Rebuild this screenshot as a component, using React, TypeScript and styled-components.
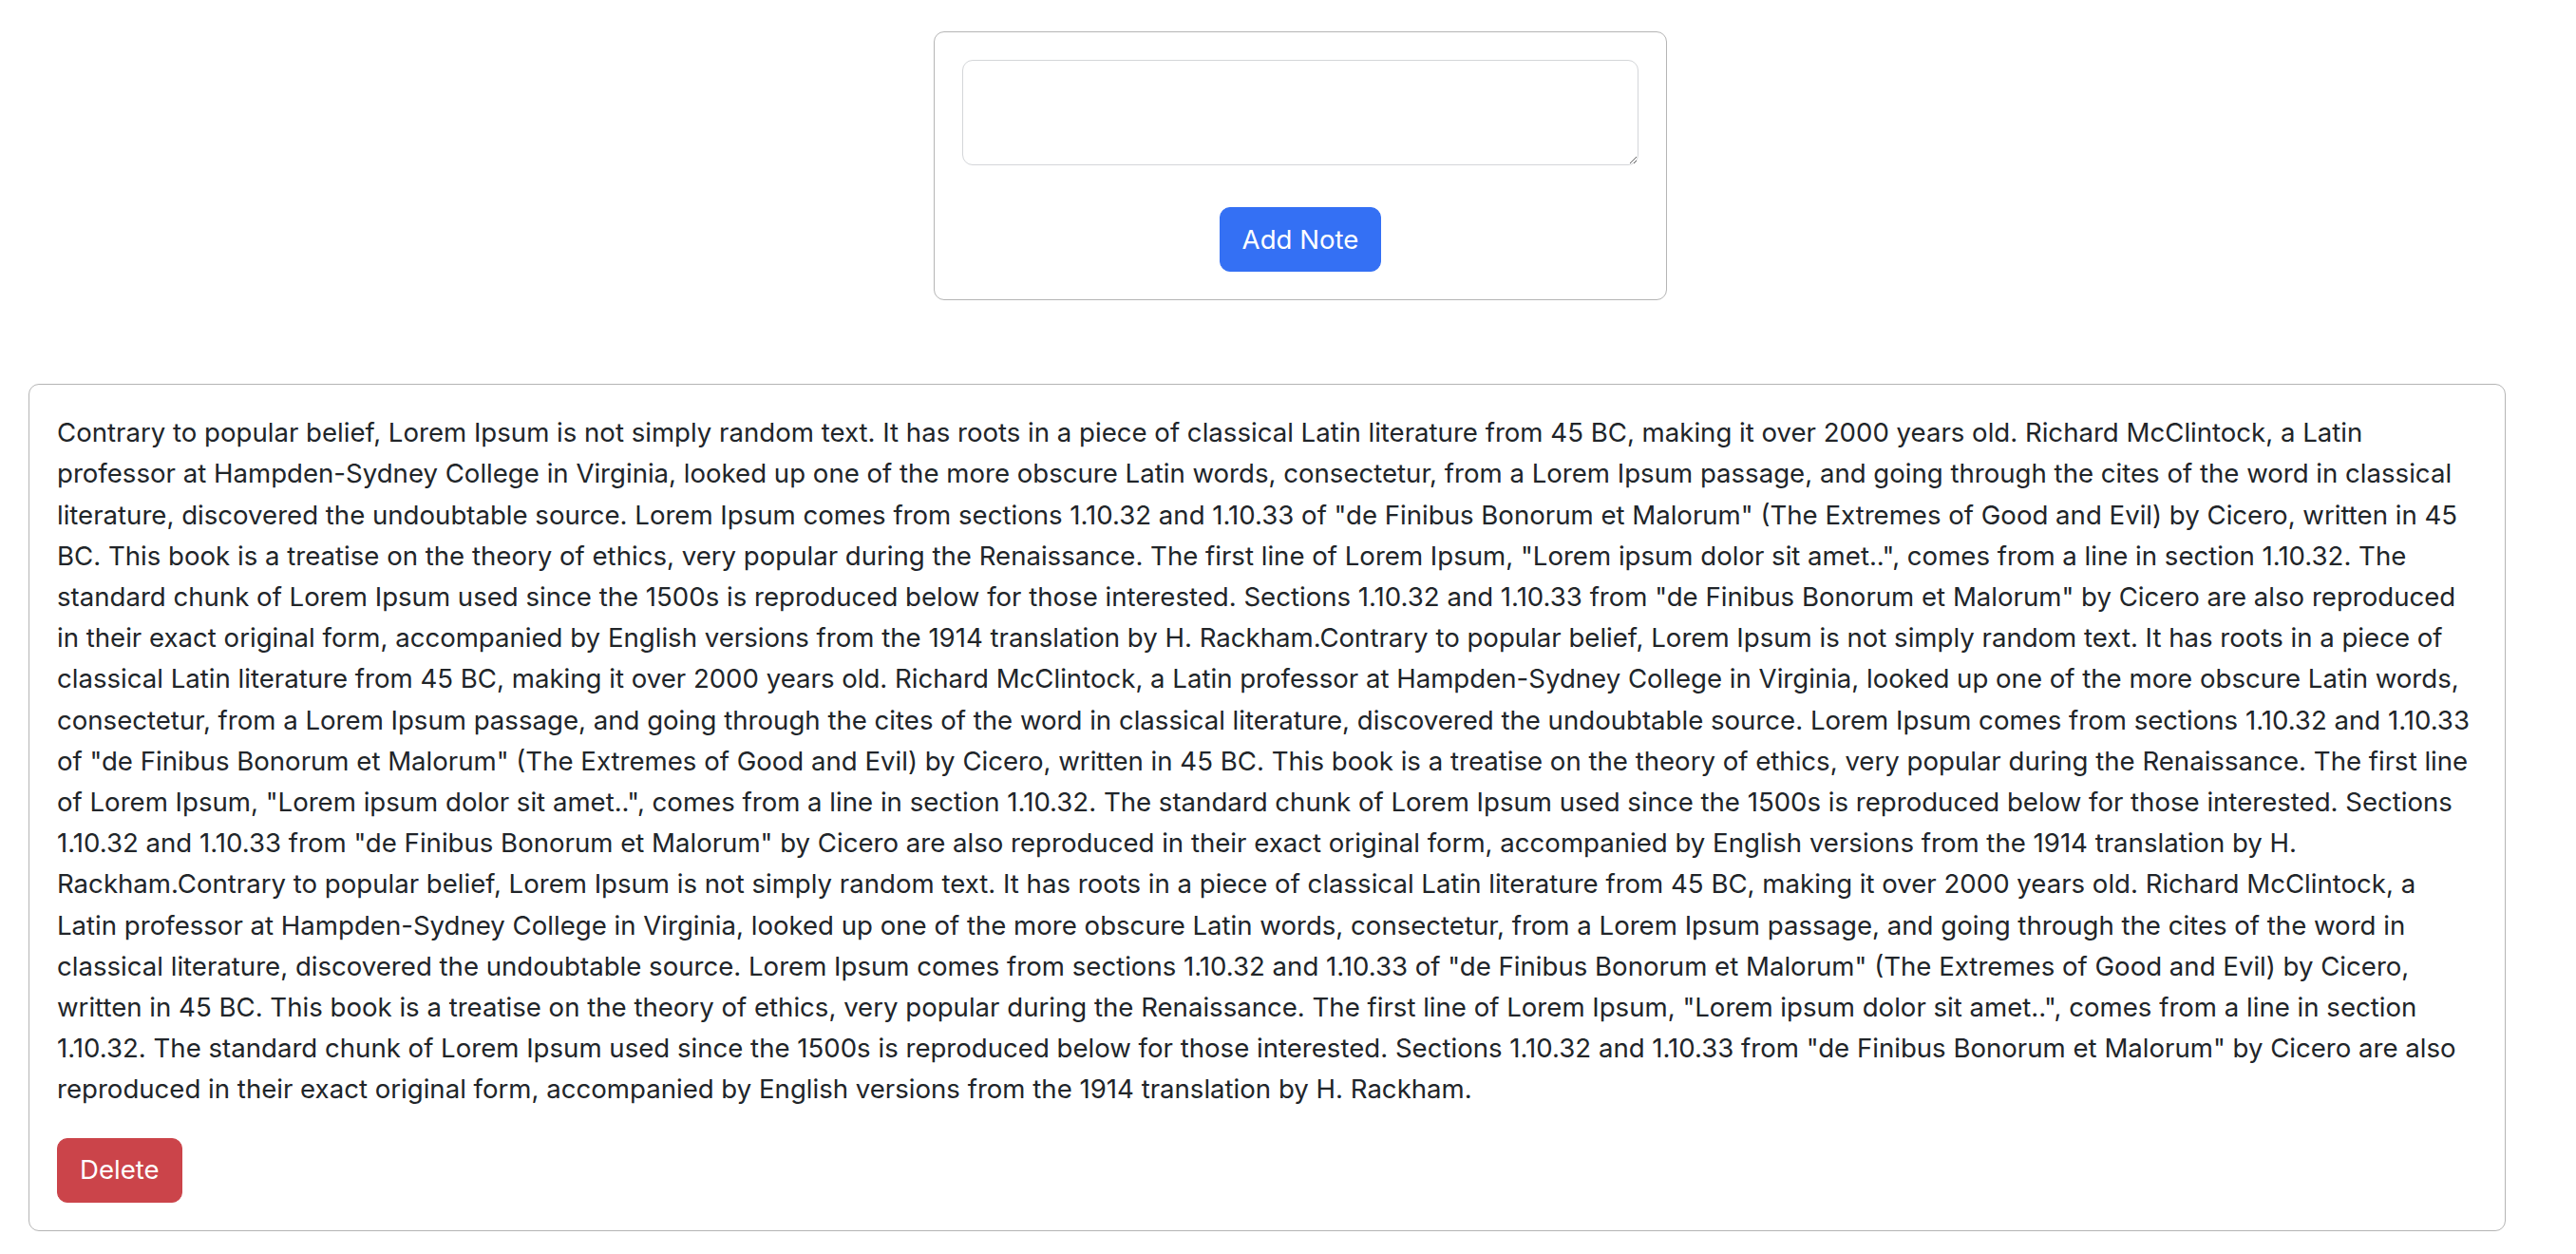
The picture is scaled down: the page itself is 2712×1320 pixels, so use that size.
import React, { useState } from "react";
import styled, { createGlobalStyle } from "styled-components";

const GlobalStyle = createGlobalStyle`
  * { box-sizing: border-box; }
  body {
    margin: 0;
    background: #ffffff;
    color: #212529;
    font-family: Inter, "Liberation Sans", sans-serif;
    font-size: 27.6px;
    line-height: 43.2px;
  }
`;

const Page = styled.main`
  padding-top: 33px;
  padding-bottom: 25px;
`;

const FormRow = styled.section`
  display: flex;
  justify-content: center;
  padding-left: 26px;
`;

const FormCard = styled.form`
  width: 772px;
  display: flex;
  flex-direction: column;
  align-items: center;
  gap: 44px;
  padding: 29px;
  border: 1px solid #b5b5b5;
  border-radius: 11px;
  background: #ffffff;
`;

const NoteInput = styled.textarea`
  display: block;
  width: 100%;
  height: 111px;
  padding: 11px 21px;
  border: 1px solid #d4d6d9;
  border-radius: 11px;
  font: inherit;
  color: #212529;
  background: #ffffff;
  resize: vertical;
  outline: none;
`;

const Button = styled.button<{ $variant: "primary" | "danger" }>`
  display: inline-block;
  padding: 11.5px 23px;
  border: 1px solid ${(p) => (p.$variant === "primary" ? "#3470f4" : "#cb444a")};
  border-radius: 11px;
  background: ${(p) => (p.$variant === "primary" ? "#3470f4" : "#cb444a")};
  color: #ffffff;
  font-family: Inter, "Liberation Sans", sans-serif;
  font-size: 27.6px;
  line-height: 43.2px;
  cursor: pointer;
`;

const NoteCard = styled.article`
  margin: 88px 74px 0 30px;
  padding: 29px;
  border: 1px solid #b5b5b5;
  border-radius: 11px;
  background: #ffffff;
`;

const NoteText = styled.p`
  margin: 0 0 29px;
  width: 2548px;
  max-width: 100%;
`;

const PARA =
  'Contrary to popular belief, Lorem Ipsum is not simply random text. It has roots in a piece of classical Latin literature from 45 BC, making it over 2000 years old. Richard McClintock, a Latin professor at Hampden-Sydney College in Virginia, looked up one of the more obscure Latin words, consectetur, from a Lorem Ipsum passage, and going through the cites of the word in classical literature, discovered the undoubtable source. Lorem Ipsum comes from sections 1.10.32 and 1.10.33 of "de Finibus Bonorum et Malorum" (The Extremes of Good and Evil) by Cicero, written in 45 BC. This book is a treatise on the theory of ethics, very popular during the Renaissance. The first line of Lorem Ipsum, "Lorem ipsum dolor sit amet..", comes from a line in section 1.10.32. The standard chunk of Lorem Ipsum used since the 1500s is reproduced below for those interested. Sections 1.10.32 and 1.10.33 from "de Finibus Bonorum et Malorum" by Cicero are also reproduced in their exact original form, accompanied by English versions from the 1914 translation by H. Rackham.';

export default function App() {
  const [draft, setDraft] = useState("");
  const [notes, setNotes] = useState<string[]>([PARA + PARA + PARA]);

  const add = (e: React.FormEvent) => {
    e.preventDefault();
    if (!draft.trim()) return;
    setNotes((n) => [...n, draft]);
    setDraft("");
  };

  return (
    <>
      <GlobalStyle />
      <Page>
        <FormRow>
          <FormCard onSubmit={add}>
            <NoteInput value={draft} onChange={(e) => setDraft(e.target.value)} />
            <Button type="submit" $variant="primary">
              Add Note
            </Button>
          </FormCard>
        </FormRow>
        {notes.map((note, i) => (
          <NoteCard key={i}>
            <NoteText>{note}</NoteText>
            <Button type="button" $variant="danger" onClick={() => setNotes((n) => n.filter((_, j) => j !== i))}>
              Delete
            </Button>
          </NoteCard>
        ))}
      </Page>
    </>
  );
}
